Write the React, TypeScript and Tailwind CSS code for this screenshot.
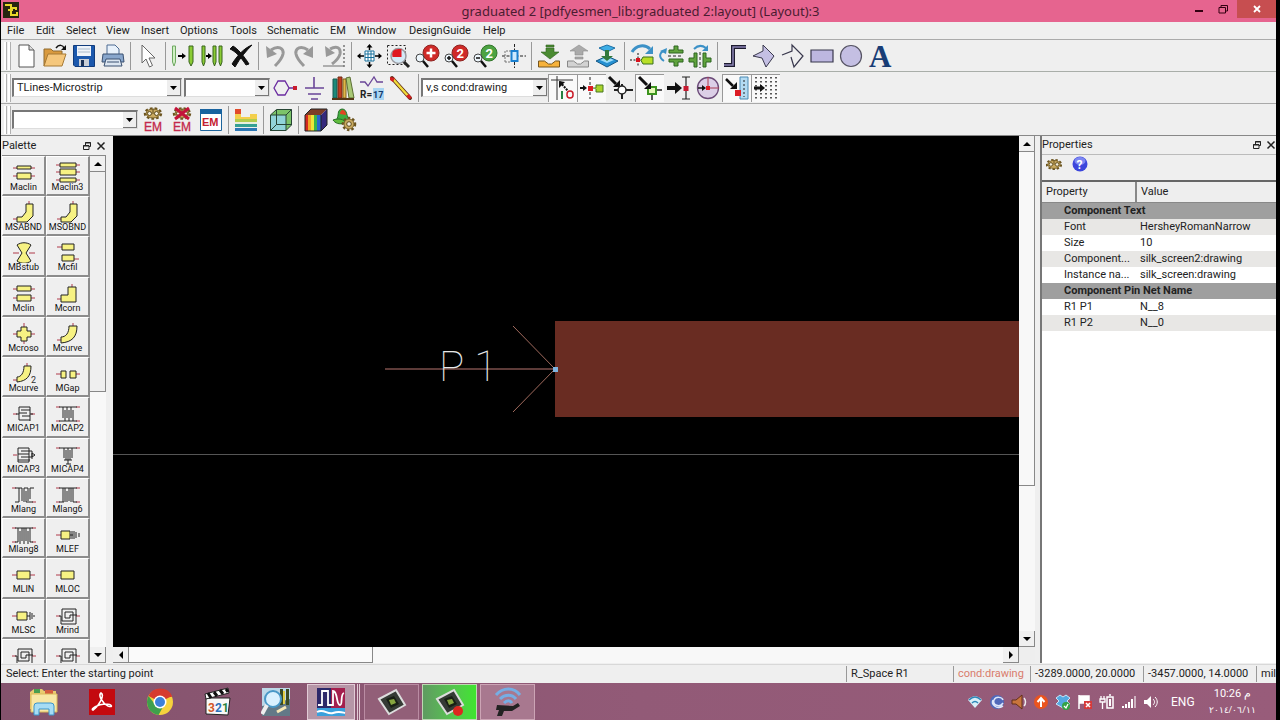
import React from "react";

type Kids = { children?: React.ReactNode };

function Tool({ label, children, on }: Kids & { label: string; on?: boolean }) {
  return (
    <button
      type="button"
      aria-label={label}
      className={
        on
          ? "flex h-7 w-[29px] shrink-0 items-center justify-center border-t border-l border-[#999] bg-[#f9f9f9]"
          : "flex h-7 w-[29px] shrink-0 items-center justify-center"
      }
    >
      <svg viewBox="0 0 24 24" className="h-6 w-6 overflow-visible" fill="none" stroke="#222">
        {children}
      </svg>
    </button>
  );
}

function Sep() {
  return (
    <span className="flex h-7 w-[6px] shrink-0 justify-center">
      <span className="h-7 w-px bg-[#999]" />
    </span>
  );
}

function Grip() {
  return (
    <span className="flex h-7 w-[10px] shrink-0 gap-px pl-[3px]">
      <span className="w-[3px] border-r border-[#b0b0b0] bg-white" />
      <span className="w-[3px] border-r border-[#b0b0b0] bg-white" />
    </span>
  );
}

function Combo({ label, value, width }: { label: string; value: string; width: string }) {
  return (
    <span className={"relative block h-[19px] shrink-0 border-t-2 border-l-2 border-r border-b border-t-[#777] border-l-[#777] border-r-[#ddd] border-b-[#ddd] bg-white " + width}>
      <select
        aria-label={label}
        defaultValue={value}
        className="block h-4 w-full appearance-none bg-transparent px-[3px] text-[11px] leading-4 text-[#222] outline-none"
      >
        <option>{value}</option>
      </select>
      <span className="pointer-events-none absolute top-0 right-0 flex h-4 w-[14px] items-center justify-center border-r border-b border-[#777] bg-[#eee]">
        <svg viewBox="0 0 7 4" className="h-1 w-[7px]">
          <path d="M0 0h7L3.500 4z" fill="#000" />
        </svg>
      </span>
    </span>
  );
}

const Gear = ({ x = 12, y = 12, r = 6 }: { x?: number; y?: number; r?: number }) => (
  <g>
    <circle cx={x} cy={y} r={r} stroke="#6b5420" strokeWidth="2.5" strokeDasharray="2.400 2" fill="none" />
    <circle cx={x} cy={y} r={r - 1} fill="#c9aa61" stroke="#7a6228" strokeWidth="1" />
    <circle cx={x} cy={y} r={r / 2.6} fill="#f3eddc" stroke="#5d4a1c" strokeWidth="1" />
  </g>
);

const DoubleGear = () => (
  <g>
    <ellipse cx="12" cy="5.500" rx="8" ry="5" stroke="#6b5420" strokeWidth="2.5" strokeDasharray="2.600 2" />
    <ellipse cx="12" cy="5.500" rx="7" ry="4.500" fill="#c9aa61" stroke="#7a6228" />
    <circle cx="8.500" cy="5.500" r="2" fill="#f3eddc" stroke="#5d4a1c" />
    <circle cx="15.500" cy="5.500" r="2" fill="#f3eddc" stroke="#5d4a1c" />
    <path d="M12 1v5" stroke="#5d4a1c" />
  </g>
);

function MainTools() {
  return (
    <div className="flex h-8 items-center border-b border-[#a9aea9]">
      <Grip />
      <Tool label="New">
        <path d="M5 1h10l5 5v17H5z" fill="#fff" stroke="#555" />
        <path d="M15 1v5h5" fill="#ddd" stroke="#555" />
      </Tool>
      <Tool label="Open">
        <path d="M1 22V5h7l2 2h9v3" fill="#d99a3e" stroke="#8f6a30" />
        <path d="M1 22L5 10h18l-4 12z" fill="#f5c77c" stroke="#a77a35" />
        <path d="M13 4c3-4 7-3 8 0" stroke="#111" strokeWidth="1.500" />
        <path d="M23 1v5h-5z" fill="#111" stroke="none" />
      </Tool>
      <Tool label="Save">
        <path d="M1.500 1.500h21v21H3l-1.500-1.500z" fill="#1b58ad" stroke="#123c7c" />
        <path d="M5 2h14v10H5z" fill="#eef3fa" stroke="none" />
        <path d="M6 5h12M6 8h12" stroke="#abc" />
        <path d="M7 15h10v7H7z" fill="#c9ced6" stroke="none" />
        <path d="M9 16h3v6H9z" fill="#1a3156" stroke="none" />
      </Tool>
      <Tool label="Print">
        <path d="M6 10V1h8l4 4v5" fill="#e8f1fb" stroke="#4c6a92" />
        <path d="M2 10h20l1 8H1z" fill="#88a6cc" stroke="#3a5070" />
        <path d="M5 15h14l2 7H3z" fill="#dce6f1" stroke="#3a5070" />
        <path d="M6 18h12" stroke="#3a5070" />
      </Tool>
      <Sep />
      <Tool label="Select">
        <path d="M6 1v18l4-4 3.500 8 3-1.500-3.500-7.500h6z" fill="#fff" stroke="#666" />
      </Tool>
      <Sep />
      <Tool label="Copy">
        <path d="M1.500 2h3v16l-1.500 4-1.500-4z" fill="#d0f0c4" stroke="#6fa862" />
        <path d="M18 2h4v16l-2 4-2-4z" fill="#8bcc35" stroke="#38641d" />
        <path d="M7 12h5" stroke="#000" strokeWidth="2" /><path d="M11 9v6l4-3z" fill="#000" stroke="none" />
      </Tool>
      <Tool label="Step and repeat">
        <path d="M2 2h3v16l-1.500 4L2 18zM13 2h3v16l-1.500 4-1.500-4zM19 2h3v16l-1.500 4-1.500-4z" fill="#8bcc35" stroke="#38641d" />
        <path d="M6 12h3" stroke="#000" strokeWidth="2" /><path d="M8 9v6l4-3z" fill="#000" stroke="none" />
      </Tool>
      <Tool label="Delete">
        <path d="M1 5c5 2 11 8 16 16l3-1C15 12 9 5 4 2zM23 1C15 4 8 12 3 20l3 3C11 14 17 7 23 1z" fill="#111" stroke="#111" />
      </Tool>
      <Sep />
      <Tool label="Undo">
        <path d="M7 6c7-5 13-2 12 4-1 5-4 8-8 12" stroke="#999" strokeWidth="3" />
        <path d="M2 2l1 12 10-4z" fill="#999" stroke="none" />
      </Tool>
      <Tool label="Redo">
        <path d="M15 6C8 1 2 4 3 10c1 5 4 8 8 12" stroke="#999" strokeWidth="3" />
        <path d="M20 2v12l-10-4z" fill="#999" stroke="none" />
      </Tool>
      <Tool label="Undo to point">
        <path d="M8 5c7-4 11-1 10 5-1 4-4 7-8 10" stroke="#999" strokeWidth="3" />
        <path d="M3 2l1 11 9-4z" fill="#999" stroke="none" />
        <path d="M1 22h21" stroke="#999" strokeWidth="1.500" />
        <path d="M22 1v22" stroke="#777" strokeWidth="1.500" strokeDasharray="2 2" />
      </Tool>
      <Sep />
      <Tool label="View all">
        <path d="M8 7h9v10H8zM11 7v10M14 7v10M8 10h9M8 13.500h9" fill="#fff" stroke="#18709c" />
        <path d="M12.500 0l3 3.500h-6zM12.500 24l3-3.500h-6zM0 12l3.500-3v6zM25 12l-3.500-3v6z" fill="#000" stroke="none" />
        <path d="M12.500 2v4M12.500 18v4M3 12h4M18 12h4" stroke="#000" strokeWidth="1.500" />
      </Tool>
      <Tool label="Zoom area">
        <rect x="1.500" y="1.500" width="18" height="19" stroke="#222" strokeDasharray="2 2" />
        <path d="M17 17l6 6" stroke="#222" strokeWidth="3" />
        <circle cx="12.500" cy="12" r="7.500" fill="#d5e9f6" stroke="#9a9aa0" strokeWidth="1.500" />
        <path d="M7 7q2-2 5.500-2h3v8H6.500q-1-3 .5-6z" fill="#df1720" stroke="none" />
      </Tool>
      <Tool label="Zoom in">
        <circle cx="16" cy="9" r="8" fill="#cf2a28" stroke="#8d2421" /><path d="M16 4.500v9M11.500 9h9" stroke="#fff" strokeWidth="2.500" />
        <circle cx="5" cy="14" r="4" fill="#edf6fc" stroke="#444" /><path d="M8 17l5 6" stroke="#111" strokeWidth="2.500" />
      </Tool>
      <Tool label="Zoom in by 2">
        <circle cx="16" cy="9" r="8" fill="#cf2a28" stroke="#8d2421" />
        <text x="12.500" y="14" fontSize="13" fontWeight="bold" fill="#fff" stroke="none">2</text>
        <circle cx="5" cy="14" r="4" fill="#edf6fc" stroke="#444" /><path d="M8 17l5 6" stroke="#111" strokeWidth="2.500" /><path d="M5 12v4M3 14h4" stroke="#111" strokeWidth="1.500" />
      </Tool>
      <Tool label="Zoom out by 2">
        <circle cx="16" cy="9" r="8" fill="#4da342" stroke="#32762b" />
        <text x="12.500" y="14" fontSize="13" fontWeight="bold" fill="#fff" stroke="none">2</text>
        <circle cx="5" cy="14" r="4" fill="#edf6fc" stroke="#444" /><path d="M8 17l5 6" stroke="#111" strokeWidth="2.500" /><path d="M3 14h4" stroke="#111" strokeWidth="1.500" />
      </Tool>
      <Tool label="Center view">
        <path d="M12.500 0v24M0 12h24" stroke="#222" strokeDasharray="3 1.500" />
        <path d="M3 18V7h6M3 18h6" stroke="#777" strokeDasharray="2 1" />
        <path d="M9.500 7h6v10h-6z" fill="#cdeaff" stroke="#1a80d0" strokeWidth="2" />
      </Tool>
      <Sep />
      <Tool label="Push into hierarchy">
        <path d="M9 1h8v2H9zM9 4h8v4h5l-9 7-9-7h5z" fill="#4a8b32" stroke="#2f6120" strokeWidth=".6" />
        <path d="M1.500 17h6l4 3h3l4-3h4v6h-21z" fill="#f7b23b" stroke="#77561f" />
      </Tool>
      <Tool label="Pop out of hierarchy">
        <path d="M9 13h8v2H9zM9 11h8V7h5l-9-6-9 6h5z" fill="#aaa" stroke="#8b8b8b" strokeWidth=".6" />
        <path d="M1.500 17h6l4 3h3l4-3h4v6h-21z" fill="#d2d2d2" stroke="#888" />
      </Tool>
      <Tool label="Layers">
        <path d="M1 17l11-5 11 5-11 6z" fill="#2590d2" stroke="#155785" />
        <path d="M5 16l7-3 7 3-7 3z" fill="#9ddcf8" stroke="none" />
        <path d="M4 4l8-3 8 3-8 4z" fill="#3daee6" stroke="#1d6fa5" />
        <path d="M10 6h4v6h4l-6 5-6-5h4z" fill="#32793c" stroke="none" />
      </Tool>
      <Sep />
      <Tool label="Rotate">
        <path d="M2 8C6 1 15 0 20 5" stroke="#3c91c7" strokeWidth="3" /><path d="M23 2v8h-8z" fill="#3c91c7" stroke="none" />
        <path d="M8 9v14M0 16h12" stroke="#111" strokeDasharray="2 1.500" />
        <path d="M13 13h10v7H13l-2-3.500z" fill="#b8df27" stroke="#39701e" />
        <path d="M6 14h4v4H6z" fill="#d9121d" stroke="none" />
      </Tool>
      <Tool label="Mirror about X">
        <path d="M5 17C0 14 0 10 4 7" stroke="#3c91c7" strokeWidth="2" /><path d="M1 7l7-3-1 6z" fill="#3c91c7" stroke="none" />
        <path d="M10 6h5V2h4v4h5v3H10zM10 18h5v4h4v-4h5v-3H10z" fill="#60a33d" stroke="#2d6421" />
        <path d="M9 12h15" stroke="#222" strokeDasharray="3 2" />
      </Tool>
      <Tool label="Mirror about Y">
        <path d="M6 5c4-4 8-4 12-1" stroke="#3c91c7" strokeWidth="2" /><path d="M20 1v6h-6z" fill="#3c91c7" stroke="none" />
        <path d="M6 9h3v14H6v-5H1v-4h5zM18 9h-3v14h3v-5h5v-4h-5z" fill="#60a33d" stroke="#2d6421" />
        <path d="M12 8v16" stroke="#222" strokeDasharray="3 2" />
      </Tool>
      <Sep />
      <Tool label="Insert path">
        <path d="M1 21h9V3h13" stroke="#1d1b2f" strokeWidth="4" /><path d="M1 21h9V3h13" stroke="#8a84b5" strokeWidth="1.500" />
      </Tool>
      <Tool label="Insert polygon">
        <path d="M11 1l11 11-8 11-4-9-9-2 10-5z" fill="#c4bfe3" stroke="#39384d" />
      </Tool>
      <Tool label="Insert polyline">
        <path d="M1 11l10-4V1l11 11-9 11-3-10" stroke="#39384d" strokeWidth="1.200" />
      </Tool>
      <Tool label="Insert rectangle">
        <path d="M1 6h22v12H1z" fill="#bdb7e0" stroke="#39384d" strokeWidth="1.200" />
      </Tool>
      <Tool label="Insert circle">
        <circle cx="12" cy="12" r="10.500" fill="#c4bfe3" stroke="#555363" strokeWidth="1.200" />
      </Tool>
      <Tool label="Insert text">
        <text x="1" y="23" fontSize="31" className="leading-none" fontWeight="bold" fontFamily="Liberation Serif, serif" fill="#183d76" stroke="none">A</text>
      </Tool>
    </div>
  );
}

function PartTools() {
  return (
    <div className="flex h-8 items-center border-b border-[#a9a9a9]">
      <Grip />
      <span className="flex gap-[2px] pl-px">
        <Combo label="Palette library" value="TLines-Microstrip" width="w-[170px]" />
        <Combo label="Component history" value="" width="w-[86px]" />
      </span>
      <Tool label="Insert pin">
        <path d="M1 12l4-7h7l4 7-4 7H5zM16 12h4" stroke="#6a2ba0" strokeWidth="1.300" /><path d="M20 10h4v4h-4z" fill="#c81c2e" stroke="none" />
      </Tool>
      <Tool label="Insert ground">
        <path d="M12 1v11M3 12h19M6 18h13M9 23h7" stroke="#6a4598" strokeWidth="1.600" />
      </Tool>
      <Tool label="Component library">
        <path d="M2 3h4v19H2z" fill="#1e8a7a" stroke="#16594f" /><path d="M7 1h4v21H7z" fill="#c03b1f" stroke="#6e2c14" />
        <path d="M12 3h3v19h-3z" fill="#e0b84a" stroke="#83621e" /><path d="M15 2l4-1 4 21h-5z" fill="#a9c874" stroke="#5b6e33" /><path d="M1 23h22" stroke="#563716" strokeWidth="2" />
      </Tool>
      <Tool label="Edit component value">
        <path d="M0 6h5l3 4 6-9 3 5h6" stroke="#6a4598" strokeWidth="1.300" />
        <path d="M13 12h11v12H13z" fill="#a9d5f2" stroke="none" />
        <text x="0" y="22" fontSize="10" fontWeight="bold" fill="#222" stroke="none">R=</text>
        <text x="13" y="22" fontSize="9" fontWeight="bold" fill="#12396a" stroke="none">17</text>
      </Tool>
      <Tool label="Insert wire">
        <path d="M3 2l18 20" stroke="#5b2614" strokeWidth="4" strokeLinecap="round" /><path d="M4 3l16 18" stroke="#f1dc3a" strokeWidth="2.500" />
        <path d="M1 1l5 1-2 4-3-2zM20 18l3 4-3 1-3-3z" fill="#d42020" stroke="none" />
      </Tool>
      <Sep />
      <Combo label="Entry layer" value="v,s cond:drawing" width="w-[127px]" />
      <Tool label="Snap enabled" on>
        <path d="M6 0v24M0 4h22" stroke="#333" /><path d="M9 6l8 9" stroke="#111" strokeWidth="2" strokeDasharray="2 1" /><path d="M8 5v7l6-6z" fill="#111" stroke="none" />
        <path d="M11 15v8" stroke="#278042" strokeWidth="2" /><rect x="16" y="15" width="6" height="7" rx="3" stroke="#c91926" strokeWidth="1.500" />
      </Tool>
      <Tool label="Pin snap" on>
        <path d="M10 1v22" stroke="#222" strokeDasharray="3 2" /><path d="M0 12h5" stroke="#111" strokeWidth="2" /><path d="M3 9v6l4-3z" fill="#111" stroke="none" />
        <path d="M12 12h4V9h7v7h-7v-3" fill="#a9d32b" stroke="#467720" /><path d="M8 10h5v5H8z" fill="#dc1d25" stroke="none" />
      </Tool>
      <Tool label="Vertex snap">
        <path d="M0 1l7 7" stroke="#111" strokeWidth="3" /><path d="M11 11V4l-7 7z" fill="#111" stroke="none" />
        <circle cx="13" cy="14" r="4" fill="#fff" stroke="#222" strokeWidth="1.500" /><path d="M13 8v2M13 18v5M17 14h7M5 14h4" stroke="#222" strokeWidth="2" />
      </Tool>
      <Tool label="Midpoint snap" on>
        <path d="M10 11h8v7h-8z" fill="#e5f8b6" stroke="#3c941f" strokeWidth="2" /><path d="M19 14h5M14 19v5" stroke="#222" strokeWidth="1.500" />
        <path d="M1 1l8 8" stroke="#111" strokeWidth="3" /><path d="M13 13V6l-7 7z" fill="#111" stroke="none" />
      </Tool>
      <Tool label="Edge snap">
        <path d="M0 12h10" stroke="#111" strokeWidth="4" /><path d="M8 6v12l7-6z" fill="#111" stroke="none" />
        <path d="M19 1v22M15 1h8M15 23h8" stroke="#222" strokeWidth="1.200" /><path d="M16.500 10h5v5h-5z" fill="#c71930" stroke="none" />
      </Tool>
      <Tool label="Arc snap">
        <circle cx="12" cy="12" r="10.500" fill="#dccfe7" stroke="#6c4b79" strokeWidth="1.300" /><path d="M12 1v12M12 12h11" stroke="#a83b53" />
        <path d="M2 12h5" stroke="#111" strokeWidth="1.500" /><path d="M6 9v6l4-3z" fill="#111" stroke="none" /><path d="M10 10h4v4h-4z" fill="#dc1d25" stroke="none" />
      </Tool>
      <Tool label="Intersection snap" on>
        <path d="M15 1h8v22h-8z" fill="#b4dbf2" stroke="#4a8ab3" /><path d="M19 4v17" stroke="#222" strokeDasharray="2 2" />
        <path d="M1 3l7 7" stroke="#111" strokeWidth="2.500" /><path d="M12 13V6l-7 7z" fill="#111" stroke="none" /><path d="M10 14h6v6h-6z" fill="#dc1d25" stroke="none" />
      </Tool>
      <Tool label="Grid snap" on>
        <path d="M2 1v23M7 1v23M12 1v23M17 1v23M22 1v23" stroke="#222" strokeWidth="1.500" strokeDasharray="1.500 2.500" />
        <path d="M0 12h7" stroke="#111" strokeWidth="3" /><path d="M6 8v8l5-4z" fill="#111" stroke="none" />
      </Tool>
    </div>
  );
}

function EmTools() {
  return (
    <div className="flex h-8 items-center border-b border-[#888]">
      <Grip />
      <span className="pl-px">
        <Combo label="EM setup" value="" width="w-[126px]" />
      </span>
      <Tool label="EM simulate">
        <DoubleGear /><text x="3" y="23" fontSize="12" fontFamily="Liberation Sans, sans-serif" fill="#c3294b" stroke="#c3294b" strokeWidth=".3">EM</text>
      </Tool>
      <Tool label="EM stop">
        <DoubleGear /><text x="3" y="23" fontSize="12" fontFamily="Liberation Sans, sans-serif" fill="#c3294b" stroke="#c3294b" strokeWidth=".3">EM</text>
        <path d="M5 0l14 11M19 0L5 11" stroke="#c3133a" strokeWidth="3" />
      </Tool>
      <Tool label="EM settings">
        <path d="M1.500 1.500h21v21h-21z" fill="#fff" stroke="#1e659c" /><path d="M1 1h22v5H1z" fill="#18639f" stroke="none" />
        <text x="3" y="18" fontSize="11" fontWeight="bold" fontFamily="Liberation Sans, sans-serif" fill="#c3202f" stroke="none">EM</text>
      </Tool>
      <Sep />
      <Tool label="Substrate">
        <path d="M1 1h6v5H1z" fill="#e14a2b" stroke="none" /><path d="M1 6h6v3h9V6h7v6H1z" fill="#f3cf4c" stroke="none" />
        <path d="M1 11h22v3H1z" fill="#b2cc4d" stroke="none" /><path d="M1 14h22v2H1z" fill="#e9efdc" stroke="none" /><path d="M1 16h22v3H1z" fill="#35a193" stroke="none" /><path d="M1 20h22v3H1z" fill="#2c77b4" stroke="none" />
      </Tool>
      <Sep />
      <Tool label="3D view">
        <path d="M1.500 7l6-5.500h15V17L17 22.500H1.500z" fill="#7cc46a" stroke="#274534" /><path d="M1.500 7H17v15.500H1.500z" fill="#91d4d9" stroke="#274534" />
        <path d="M7.500 2v14.500h15M7.500 16.500l-6 6M17 7l5.500-5.500" stroke="#274534" />
      </Tool>
      <Sep />
      <Tool label="Far field">
        <path d="M1 7h4v16H1z" fill="#d52920" stroke="none" /><path d="M4 7h4v16H4z" fill="#f2a529" stroke="none" /><path d="M7 7h4v16H7z" fill="#eee63a" stroke="none" />
        <path d="M10 7h4v16h-4z" fill="#3bb54a" stroke="none" /><path d="M13 7h4v16h-4z" fill="#2a66cf" stroke="none" /><path d="M1 7l6-6h16l-6 6z" fill="#7c3d26" stroke="none" />
        <path d="M17 7l6-6v16l-6 6z" fill="#352a7d" stroke="none" /><path d="M1 7l6-6h16v16l-6 6H1zM17 7v16" stroke="#222" />
      </Tool>
      <Tool label="Antenna settings">
        <path d="M3 12c4-4 0-10 6-11 6 0 4 9 8 11-5 5-10 4-14 0z" fill="#3fae3e" stroke="#276e27" /><path d="M7 6c0-6 6-5 6 1z" fill="#e34321" stroke="none" /><path d="M0 12c5-2 12-1 12 3-6 2-10 0-12-3z" fill="#61bd3f" stroke="#276e27" />
        <Gear x={16} y={16} r={6} />
      </Tool>
    </div>
  );
}

const Pin = ({ d }: { d: string }) => <path d={d} stroke="#b03a4a" />;
const Y = "#f7f283";

const glyphs: Record<string, React.ReactNode> = {
  clin: (<><Pin d="M1 6h4M19 6h4M1 15h4M19 15h4" /><path d="M5 3h14v5H5zM5 12h14v6H5z" fill={Y} /></>),
  aclin: (<><Pin d="M1 6h4M19 6h4M1 14h4M19 14h4" /><path d="M5 4h14v3H5zM5 11h14v6H5z" fill={Y} /></>),
  clin3: (<><Pin d="M0 3h4M20 3h4M0 10h4M20 10h4M0 18h4M20 18h4" /><path d="M4 1h16v4H4zM4 7h16v6H4zM4 16h16v4H4z" fill={Y} /></>),
  bend: (<><Pin d="M1 17h4M17 2V-1" /><path d="M5 15h5l4-5V2h7v12l-6 6H5z" fill={Y} /></>),
  bstub: (<><Pin d="M1 11h6M17 11h6" /><path d="M5 3c4-3 10-3 14 0l-5 8 5 8c-4 3-10 3-14 0l5-8z" fill={Y} /></>),
  cfil: (<><Pin d="M1 5h5M18 17h5" /><path d="M6 2h12v6H6zM6 13h12v6H6z" fill={Y} /></>),
  corn: (<><Pin d="M1 16h4M16 1v3" /><path d="M5 12h7V4h8v15H5z" fill={Y} /></>),
  cross: (<><Pin d="M1 11h4M19 11h4M12 0v4M12 18v4" /><path d="M9 4h6v4h4v6h-4v4H9v-4H5V8h4z" fill={Y} /></>),
  curve: (<><Pin d="M1 17h4M17 3V0" /><path d="M5 14c5 0 8-4 8-11h8c0 11-5 16-16 17z" fill={Y} /></>),
  curve2: (<><Pin d="M1 17h4M15 3V0" /><path d="M5 14c4 0 7-4 7-11h7c0 10-4 15-14 16z" fill={Y} /><text x="19" y="20" fontSize="9" fill="#333" stroke="none">2</text></>),
  gap: (<><Pin d="M0 11h5M20 11h4" /><path d="M5 8h5v7H5zM14 8h6v7h-6z" fill={Y} /></>),
  cap1: (<><Pin d="M1 11h4M19 11h4" /><path d="M7 4v13h11M7 4h11v14M9 7h9M7 10h8M10 13h8M7 11H4M18 11h3" /></>),
  cap2: (<><Pin d="M0 4h4M20 4h4M0 18h4M20 18h4" /><path d="M3 4h18M3 18h18M7 4v11M9 7v11M11 4v11M13 7v11M15 4v11M17 7v11" /></>),
  cap3: (<><Pin d="M1 11h4" /><path d="M6 4v14M6 4h11v14H6M9 7h11M6 10h11M9 13h11M6 16h12M20 7v8M20 9l3 2-3 2z" /></>),
  cap4: (<><Pin d="M0 4h4M20 4h4" /><path d="M3 4h18M8 4v10M10 6v10M12 4v16M14 6v10M16 4v10M8 16h8M10 20h5" /></>),
  lang: (<><Pin d="M0 4h4M20 18h4" /><path d="M3 4h7v13M12 18V4h4v13M14 7v11h7M7 4v14H3M18 4v11M18 4h4" /></>),
  lang6: (<><Pin d="M0 4h4M20 4h4M0 18h4M20 18h4" /><path d="M3 4h18M3 18h5M17 18h4M7 4v14M9 4v14M11 7v11M13 4v13M15 4v14M17 4v14" /></>),
  lang8: (<><Pin d="M0 4h4M20 4h4M0 18h4M20 18h4" /><path d="M3 4h18M3 18h3M18 18h3M6 4v14M8 7v13M10 4v13M12 4v16M14 4v13M16 7v13M18 4v14" /></>),
  lef: (<><Pin d="M0 11h5" /><path d="M5 7h9v8H5z" fill={Y} /><path d="M14 11h3M16 7v8M18 7v8M20 8v6M23 9v4" /></>),
  lin: (<><Pin d="M0 11h5M18 11h5" /><path d="M5 7h13v8H5z" fill={Y} /></>),
  loc: (<><Pin d="M0 11h5" /><path d="M5 7h13v8H5z" fill={Y} /></>),
  lsc: (<><Pin d="M0 11h5" /><path d="M5 7h10v8H5z" fill={Y} /><path d="M15 11h3M18 7v8M20 8v6M22 10v2" /></>),
  rind: (<><Pin d="M0 11h4M20 11h4" /><path d="M3 11h2v8h15V4H6v12h11V7H9v6h5v-3h7" /></>),
};

const parts: [string, string][] = [
  ["Maclin", "aclin"], ["Maclin3", "clin3"], ["MSABND", "bend"], ["MSOBND", "bend"],
  ["MBstub", "bstub"], ["Mcfil", "cfil"], ["Mclin", "clin"], ["Mcorn", "corn"],
  ["Mcroso", "cross"], ["Mcurve", "curve"], ["Mcurve", "curve2"], ["MGap", "gap"],
  ["MICAP1", "cap1"], ["MICAP2", "cap2"], ["MICAP3", "cap3"], ["MICAP4", "cap4"],
  ["Mlang", "lang"], ["Mlang6", "lang6"], ["Mlang8", "lang8"], ["MLEF", "lef"],
  ["MLIN", "lin"], ["MLOC", "loc"], ["MLSC", "lsc"], ["Mrind", "rind"],
  ["", "rind"], ["", "rind"],
];

function ScrollButton({ label, d }: { label: string; d: string }) {
  return (
    <button type="button" aria-label={label} className="flex h-4 w-4 shrink-0 items-center justify-center border-r border-b border-[#888] bg-[#f0f0f0]">
      <svg viewBox="0 0 8 8" className="h-2 w-2"><path d={d} fill="#000" /></svg>
    </button>
  );
}

const UP = "M0 6h8L4 2z";
const DOWN = "M0 2h8L4 6z";
const LEFT = "M6 0v8L2 4z";
const RIGHT = "M2 0v8l4-4z";

function DockButtons() {
  return (
    <span className="flex shrink-0 gap-1">
      <button type="button" aria-label="Float panel">
        <svg viewBox="0 0 10 10" className="h-[10px] w-[10px]" fill="none" stroke="#222"><path d="M3.500 4V1.500h5v4H7M1.500 4.500H7v4H1.500zM3 2h6M1 5h6" /></svg>
      </button>
      <button type="button" aria-label="Close panel">
        <svg viewBox="0 0 10 10" className="h-[10px] w-[10px]" stroke="#222" strokeWidth="1.500"><path d="M1.500 1.500l7 7M8.500 1.500l-7 7" /></svg>
      </button>
    </span>
  );
}

function Palette() {
  return (
    <aside className="flex w-[112px] shrink-0 flex-col pr-[7px] pl-px">
      <header className="flex h-[19px] shrink-0 items-center justify-between">
        <h2>Palette</h2>
        <DockButtons />
      </header>
      <div className="flex min-h-0 flex-1 border-t border-[#888]">
        <div className="min-h-0 w-[88px] shrink-0 overflow-hidden">
          <div className="grid h-[523px] auto-rows-fr grid-cols-2">
            {parts.map(([name, g], i) => (
              <button key={i} type="button" aria-label={name || "Spiral inductor"} className="flex flex-col items-center overflow-hidden border-t border-r-2 border-b-2 border-l border-t-white border-r-[#8c8c8c] border-b-[#8c8c8c] border-l-white bg-[#efefef] pt-1">
                <svg viewBox="0 -1 24 22" className="h-[22px] w-6 shrink-0" fill="none" stroke="#222">{glyphs[g]}</svg>
                {name && <span className="font-['Liberation_Sans_Narrow','Roboto',sans-serif] text-[9px] leading-[9px] text-[#111]">{name}</span>}
              </button>
            ))}
          </div>
        </div>
        <div className="flex w-4 flex-col bg-[#f8f8f8]">
          <ScrollButton label="Scroll palette up" d={UP} />
          <span className="h-[220px] border-r border-b border-[#888] bg-[#efefef]" />
          <span className="flex-1" />
          <ScrollButton label="Scroll palette down" d={DOWN} />
        </div>
      </div>
    </aside>
  );
}

function Canvas() {
  return (
    <main className="flex min-w-0 flex-1">
      <div className="flex min-w-0 flex-1 flex-col">
        <svg className="min-h-0 w-full flex-1 bg-black" role="img" aria-label="Layout drawing">
          <rect x="442" y="185" width="100%" height="96" fill="#692c22" />
          <path d="M0 318.500h2000" stroke="#555" />
          <path d="M272 233h170" stroke="#b97770" fill="none" />
          <path d="M400 190l42 43-42 43" stroke="#a06a5d" fill="none" />
          <text x="326" y="245" fontSize="42" fontWeight="100" fontFamily="Roboto, sans-serif" fill="#e8e8e8">P 1</text>
          <rect x="440" y="231" width="5" height="5" fill="#7fb4e0" />
        </svg>
        <div className="flex h-4 shrink-0 bg-[#f8f8f8]">
          <ScrollButton label="Scroll left" d={LEFT} />
          <span className="w-[244px] border-r border-b border-[#888] bg-[#fafafa]" />
          <span className="flex-1" />
          <ScrollButton label="Scroll right" d={RIGHT} />
        </div>
      </div>
      <div className="flex w-4 shrink-0 flex-col bg-[#f8f8f8]">
        <ScrollButton label="Scroll up" d={UP} />
        <span className="h-[334px] border-r border-b border-[#888]" />
        <span className="flex-1" />
        <ScrollButton label="Scroll down" d={DOWN} />
        <span className="h-4 bg-[#eee]" />
      </div>
    </main>
  );
}

const rows: { name: string; value?: string; shade?: boolean }[] = [
  { name: "Component Text" },
  { name: "Font", value: "HersheyRomanNarrow", shade: true },
  { name: "Size", value: "10" },
  { name: "Component...", value: "silk_screen2:drawing", shade: true },
  { name: "Instance na...", value: "silk_screen:drawing" },
  { name: "Component Pin Net Name" },
  { name: "R1 P1", value: "N__8" },
  { name: "R1 P2", value: "N__0", shade: true },
];

function Properties() {
  return (
    <aside className="ml-[5px] flex w-[236px] shrink-0 flex-col border-l-2 border-[#777]">
      <header className="flex h-[19px] shrink-0 items-center justify-between border-b border-[#bbb]">
        <h2>Properties</h2>
        <DockButtons />
      </header>
      <div className="flex h-[25px] shrink-0 gap-[10px] px-1 pt-px">
        <button type="button" aria-label="Settings" className="h-4 w-4"><svg viewBox="3 -4 18 18" className="h-4 w-4" fill="none"><DoubleGear /></svg></button>
        <button type="button" aria-label="Help" className="h-4 w-4">
          <svg viewBox="0 0 16 16" className="h-4 w-4"><circle cx="8" cy="8" r="7.500" fill="#3c46dc" /><ellipse cx="8" cy="5" rx="5.500" ry="4" fill="#7d87f2" /><text x="4.500" y="12.500" fontSize="12" fontWeight="bold" fill="#fff">?</text></svg>
        </button>
      </div>
      <div className="min-h-0 flex-1 border-t-2 border-[#666] bg-white">
        <table className="w-full table-fixed border-collapse">
          <thead>
            <tr className="h-5 border-b border-[#888] bg-[#eee] text-left">
              <th className="w-[94px] border-r-2 border-[#888] pl-1 font-normal">Property</th>
              <th className="pl-1 font-normal">Value</th>
            </tr>
          </thead>
          <tbody>
            {rows.map((r) =>
              r.value === undefined ? (
                <tr key={r.name} className="h-4 bg-[#9f9f9f]">
                  <th colSpan={2} scope="colgroup" className="pl-[22px] text-left leading-4 font-bold">{r.name}</th>
                </tr>
              ) : (
                <tr key={r.name} className={r.shade ? "h-4 bg-[#e8e7e5]" : "h-4 bg-white"}>
                  <td className="pl-[22px] leading-4 whitespace-nowrap">{r.name}</td>
                  <td className="pl-1 leading-4 whitespace-nowrap">{r.value}</td>
                </tr>
              )
            )}
          </tbody>
        </table>
      </div>
    </aside>
  );
}

function Task({ label, children, look }: Kids & { label: string; look?: string }) {
  return (
    <button type="button" aria-label={label} className={"flex h-9 shrink-0 items-center justify-center " + (look ?? "w-[58px]")}>
      <svg viewBox="0 0 30 30" className="h-[30px] w-[30px]" fill="none">{children}</svg>
    </button>
  );
}

function Tray({ label, children }: Kids & { label: string }) {
  return (
    <button type="button" aria-label={label} className="h-4 w-4 shrink-0">
      <svg viewBox="0 0 16 16" className="h-4 w-4" fill="none">{children}</svg>
    </button>
  );
}

const Camtasia = () => (
  <><path d="M2 12L19 3l9 15-16 9z" fill="#353b35" stroke="#ddd" strokeWidth="2" /><path d="M9 12l8-3 5 8-8 4z" fill="#182014" /><path d="M12 13l5-1 2 4-5 2z" fill="#86a63f" /></>
);

function Taskbar() {
  return (
    <footer className="flex h-[37px] shrink-0 items-center justify-between bg-linear-to-r from-[#84536d] via-[#925a77] to-[#985c7a] text-white">
      <nav aria-label="Taskbar" className="flex items-center pl-[14px]">
        <Task label="File Explorer">
          <path d="M1 5l4-3h8l2 2h12v18H1z" fill="#e9cc70" /><path d="M5 2h6v4H5z" fill="#4a9e50" /><path d="M16 3h8v4h-8z" fill="#d45c3f" /><path d="M2 7h26v18H2z" fill="#f8e7a5" stroke="#d9b95b" />
          <path d="M5 28V19q0-3 3-3h14q3 0 3 3v9h-5v-6H10v6z" fill="#a6dcf4" stroke="#3a94cb" />
        </Task>
        <Task label="Adobe Reader">
          <path d="M2 2h26v26H2z" fill="#c4090f" /><path d="M14 6c4 2-2 13-8 17-3-1 5-6 12-6 8 0 8 4 3 2C15 16 11 8 14 6z" stroke="#fff" strokeWidth="1.600" />
        </Task>
        <Task label="Chrome">
          <circle cx="15" cy="15" r="13" fill="#f6d23d" /><path d="M15 15L3.500 9A13 13 0 0 1 27 9z" fill="#d63b2f" /><path d="M15 2A13 13 0 0 1 27 10H15z" fill="#d63b2f" /><path d="M3.500 9A13 13 0 0 0 13.500 28l5-9-8-1z" fill="#3f9f4c" />
          <circle cx="15" cy="15" r="6.500" fill="#fff" /><circle cx="15" cy="15" r="5" fill="#3e80d8" />
        </Task>
        <Task label="Media Player Classic">
          <path d="M3 11h24l-2 17-22-1z" fill="#f8f8f8" stroke="#222" /><path d="M2 7l23-6 1 5L3 12z" fill="#fff" stroke="#222" /><path d="M5 6l3 5M11 5l3 4M17 3l3 4M23 2l2 3" stroke="#111" strokeWidth="3" />
          <text x="5" y="25" fontSize="12" fontWeight="bold" fill="#d45727">3</text><text x="12" y="25" fontSize="12" fontWeight="bold" fill="#2b72bd">2</text><text x="19" y="25" fontSize="12" fontWeight="bold" fill="#27833d">1</text>
        </Task>
        <Task label="ADS Main">
          <path d="M1 1h28v28H1z" fill="#bcd8e8" /><path d="M1 19l10-2 18-5v17H1z" fill="#637987" /><path d="M19 2h3v16h-3zM25 2h3v16h-3z" fill="#3a4a25" /><path d="M23 4v13" stroke="#e3cf46" strokeWidth="2" />
          <circle cx="12" cy="12" r="8" fill="#d9f1ff" stroke="#4998c7" strokeWidth="2" /><path d="M6 18l-5 9" stroke="#eee" strokeWidth="4" /><path d="M16 25l9-5" stroke="#f7e7b5" strokeWidth="3" />
        </Task>
        <Task label="ADS Layout" look="ml-[2px] w-[48px] border border-[#e2cbd6] bg-[#b696a7]">
          <path d="M1 1h28v28H1z" fill="#2c2869" /><path d="M15 1h14v20H15z" fill="#a41f4d" /><path d="M1 21h28v8H1z" fill="#3aa0dc" /><path d="M1 25c7-4 10 3 16 1s8-1 12 0" stroke="#fff" strokeWidth="2" />
          <path d="M2 18h4V4h6v14h5V4c5 0 3 14 7 14 3 0 0-11 4-12" stroke="#fff" strokeWidth="1.800" />
        </Task>
        <span className="mr-1 ml-[2px] h-9 w-[3px] border-x border-[#e2cbd6]" />
        <Task label="Camtasia" look="w-[55px] border border-[#ba8ca3] bg-[#925f78]"><Camtasia /></Task>
        <Task label="Camtasia Recorder" look="ml-[3px] w-[55px] border border-[#bcd9b2] bg-linear-to-r from-[#5f9b60] to-[#3ee52d]">
          <Camtasia /><circle cx="23" cy="24" r="5" fill="#dd2820" />
        </Task>
        <Task label="Virtual Wi-Fi" look="ml-[3px] w-[55px] border border-[#cca4b5] bg-[#a8788f]">
          <path d="M3 8c7-8 18-8 24 0M7 12c5-5 12-5 16 0M11 16c3-3 6-3 8 0" stroke="#76aee4" strokeWidth="3" /><path d="M4 18l16 1 5-3 2 3-8 5H11l-2 5H4l2-6H3z" fill="#222" />
        </Task>
      </nav>
      <div className="flex items-center gap-[6px] pr-5">
        <Tray label="Wi-Fi"><path d="M1 6c4-5 10-5 14 0L8 14z" fill="#d8eef8" /><path d="M2 6c4-4 8-4 12 0M5 9c2-2 4-2 6 0" stroke="#2c86b8" strokeWidth="1.500" /></Tray>
        <Tray label="BitTorrent"><circle cx="8" cy="8" r="7" fill="#5068ba" /><path d="M14 9c-3 5-11 2-9-3 2-4 8-3 9 0M14 12c-7 4-12-2-10-6" stroke="#dce5fa" strokeWidth="1.500" /></Tray>
        <Tray label="Audio driver"><path d="M1 6h4l6-5v14l-6-5H1z" fill="#c9753c" stroke="#633018" /><path d="M13 4c2 2 2 6 0 8" stroke="#eee" strokeWidth="1.500" /></Tray>
        <Tray label="Update"><circle cx="8" cy="8" r="7" fill="#ea541f" /><path d="M8 13V5M4.500 8L8 4l3.500 4" stroke="#fff" strokeWidth="2" /></Tray>
        <Tray label="Dropbox"><path d="M5 1l3 2 3-2 4 3-3 3 3 3-7 4-7-4 3-3-3-3z" fill="#55a8e2" stroke="#c9e5f7" /><circle cx="11" cy="12" r="4" fill="#35a246" /><path d="M9 12l2 2 2-4" stroke="#fff" strokeWidth="1.300" /></Tray>
        <Tray label="Action Center"><path d="M2 1v14M3 2h9v7H3z" fill="#fff" stroke="#fff" strokeWidth="1.500" /><path d="M7 7h8v8H7z" fill="#d73a3a" /><path d="M9 9l4 4M13 9l-4 4" stroke="#fff" strokeWidth="1.500" /></Tray>
        <Tray label="Battery"><path d="M8 3h6v11H8zM10 1h2" stroke="#fff" strokeWidth="1.500" /><path d="M10 5h2v7h-2z" fill="#fff" /><path d="M2 2v3M5 2v3M1 5h5v3H1zM3.500 8v7" stroke="#fff" strokeWidth="1.300" /></Tray>
        <Tray label="Network"><path d="M1 14v-2h2v2zM4 14v-4h2v4zM7 14V8h2v6zM10 14V5h2v9z" fill="#fff" /><path d="M13 14V2h2v12z" fill="#ffffff88" /></Tray>
        <Tray label="Volume"><path d="M1 6h3l4-4v12l-4-4H1z" fill="#fff" /><path d="M10 5c2 2 2 4 0 6M12 3c3 3 3 7 0 10" stroke="#fff" /></Tray>
        <span className="ml-[6px] text-[12px]">ENG</span>
        <time className="ml-2 flex flex-col items-center text-[11px] leading-4">
          <span>10:26 م</span>
          <span className="text-[9px]">٢٠١٤/٠٦/١١</span>
        </time>
      </div>
    </footer>
  );
}

const menus: [string, string][] = [
  ["File", "w-[29px]"], ["Edit", "w-[30px]"], ["Select", "w-[40px]"], ["View", "w-[35px]"], ["Insert", "w-[39px]"],
  ["Options", "w-[50px]"], ["Tools", "w-[37px]"], ["Schematic", "w-[63px]"], ["EM", "w-[27px]"], ["Window", "w-[52px]"],
  ["DesignGuide", "w-[74px]"], ["Help", "w-[29px]"],
];

export default function App() {
  return (
    <div className="flex h-screen flex-col overflow-hidden border-r-4 border-l border-black bg-[#efefef] font-['Roboto','Open_Sans',sans-serif] text-[11px] leading-4 text-[#222]">
      <header className="flex h-[22px] shrink-0 items-start bg-[#e6648f]">
        <svg viewBox="0 0 16 16" className="mt-[2px] ml-[2px] h-4 w-4"><path d="M0 0h16v16H0z" fill="#27250f" /><path d="M2 3h6v3h5v2M5 8h5M8 8v5h6v-3" stroke="#e8d829" strokeWidth="2" fill="none" /></svg>
        <h1 className="flex-1 pl-[75px] text-center font-['Noto_Sans',sans-serif] text-[13px] leading-[22px] text-[#4b1c31]">graduated 2 [pdfyesmen_lib:graduated 2:layout] (Layout):3</h1>
        <button type="button" aria-label="Minimize" className="flex h-[17px] w-6 items-center justify-center"><svg viewBox="0 0 10 10" className="h-[10px] w-[10px]"><path d="M1 6h8v2H1z" fill="#301" /></svg></button>
        <button type="button" aria-label="Restore" className="mr-[2px] flex h-[17px] w-6 items-center justify-center"><svg viewBox="0 0 10 10" className="h-[10px] w-[10px]" fill="none" stroke="#301"><path d="M1 3.500h6.500v5.500H1zM3 3V1.500h6.500V7H8" /></svg></button>
        <button type="button" aria-label="Close" className="flex h-[18px] w-[39px] items-center justify-center bg-[#c74e50]"><svg viewBox="0 0 8 8" className="h-2 w-2" stroke="#fff" strokeWidth="1.800"><path d="M1 1l6 6M7 1L1 7" /></svg></button>
      </header>
      <nav aria-label="Menu" className="flex h-[18px] shrink-0 items-center border-b border-[#aaa] pl-[6px]">
        {menus.map(([m, w]) => (
          <button key={m} type="button" className={"shrink-0 text-left whitespace-nowrap " + w}>{m}</button>
        ))}
      </nav>
      <div className="shrink-0">
        <MainTools />
        <PartTools />
        <EmTools />
      </div>
      <div className="flex min-h-0 flex-1 pb-px">
        <Palette />
        <Canvas />
        <Properties />
      </div>
      <div className="flex h-[19px] shrink-0 items-center gap-[2px] overflow-hidden border-t border-[#d8d8d8] pl-[5px] whitespace-nowrap" role="status">
        <span className="flex-1">Select: Enter the starting point</span>
        <span className="w-[105px] border-l border-[#999] pl-1">R_Space R1</span>
        <span className="w-[75px] border-l border-[#999] pl-1 text-[#d97c6c]">cond:drawing</span>
        <span className="w-[111px] border-l border-[#999] pl-1">-3289.0000, 20.0000</span>
        <span className="w-[111px] border-l border-[#999] pl-1">-3457.0000, 14.0000</span>
        <span className="w-[20px] overflow-hidden border-l border-[#999] pl-1">mil</span>
      </div>
      <Taskbar />
    </div>
  );
}
